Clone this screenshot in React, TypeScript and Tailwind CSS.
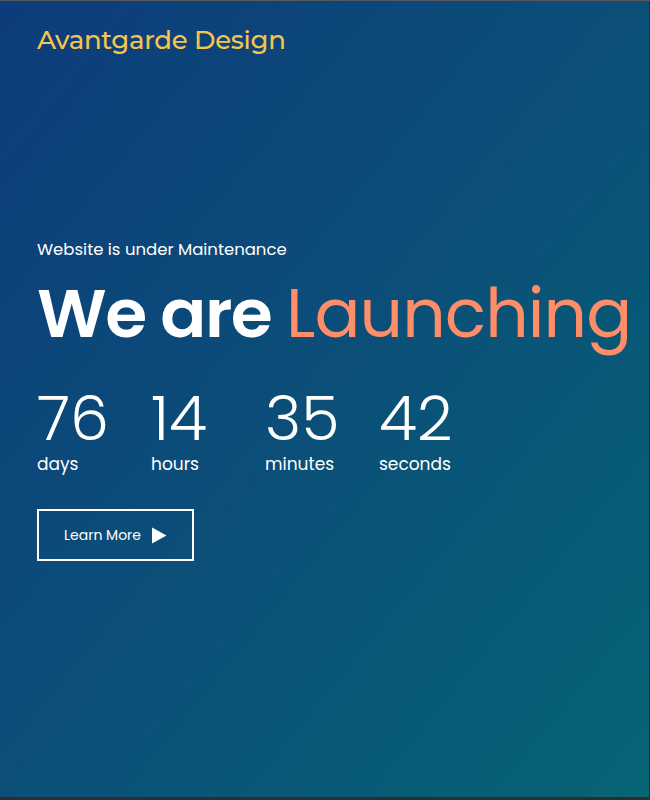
import React from 'react';

const units = [
  { value: '76', label: 'days' },
  { value: '14', label: 'hours' },
  { value: '35', label: 'minutes' },
  { value: '42', label: 'seconds' },
];

export default function App() {
  return (
    <div className="w-[650px] h-[800px] bg-[#2b2f33] flex flex-col">
      <div className="h-px bg-[#55585c]" />
      <div
        className="flex-1 mr-px bg-gradient-to-br from-[#0e3b7b] via-[#0b4f78] to-[#066474] text-white px-[37px] flex flex-col"
        style={{ fontFamily: "Poppins, 'Open Sans', 'Noto Sans', sans-serif" }}
      >
        {/* Logo */}
        <div className="pt-[21px] text-[26px] leading-[36px] text-[#f7c44c] font-medium tracking-[-0.3px] font-['Montserrat','Open_Sans',sans-serif]">
          Avantgarde Design
        </div>

        {/* Hero */}
        <div className="mt-[180px] text-[16.5px] leading-[24px]">Website is under Maintenance</div>
        <h1 className="mt-[14px] text-[68px] leading-[76px] tracking-[-1.5px] whitespace-nowrap">
          <span className="font-semibold">We are </span>
          <span className="text-[#ff8d68] font-normal tracking-[-0.9px]">Launching</span>
        </h1>

        {/* Countdown */}
        <div className="mt-[35px] flex">
          {units.map((u) => (
            <div key={u.label} className="w-[114px] flex flex-col">
              <span className="text-[62px] leading-[64px] font-light">{u.value}</span>
              <span className="mt-[2px] text-[17px] leading-[22px]">{u.label}</span>
            </div>
          ))}
        </div>

        {/* Button */}
        <div className="mt-[34px]">
          <button className="w-[157px] h-[52px] border-2 border-white flex items-center justify-center gap-[10px] text-[14px]">
            <span>Learn More</span>
            <svg width="16" height="17" viewBox="0 0 16 17">
              <path d="M1 0.5 L15.5 8.5 L1 16.5 Z" fill="white" />
            </svg>
          </button>
        </div>
      </div>
      <div className="h-[3px] bg-[#2b2f33]" />
    </div>
  );
}
